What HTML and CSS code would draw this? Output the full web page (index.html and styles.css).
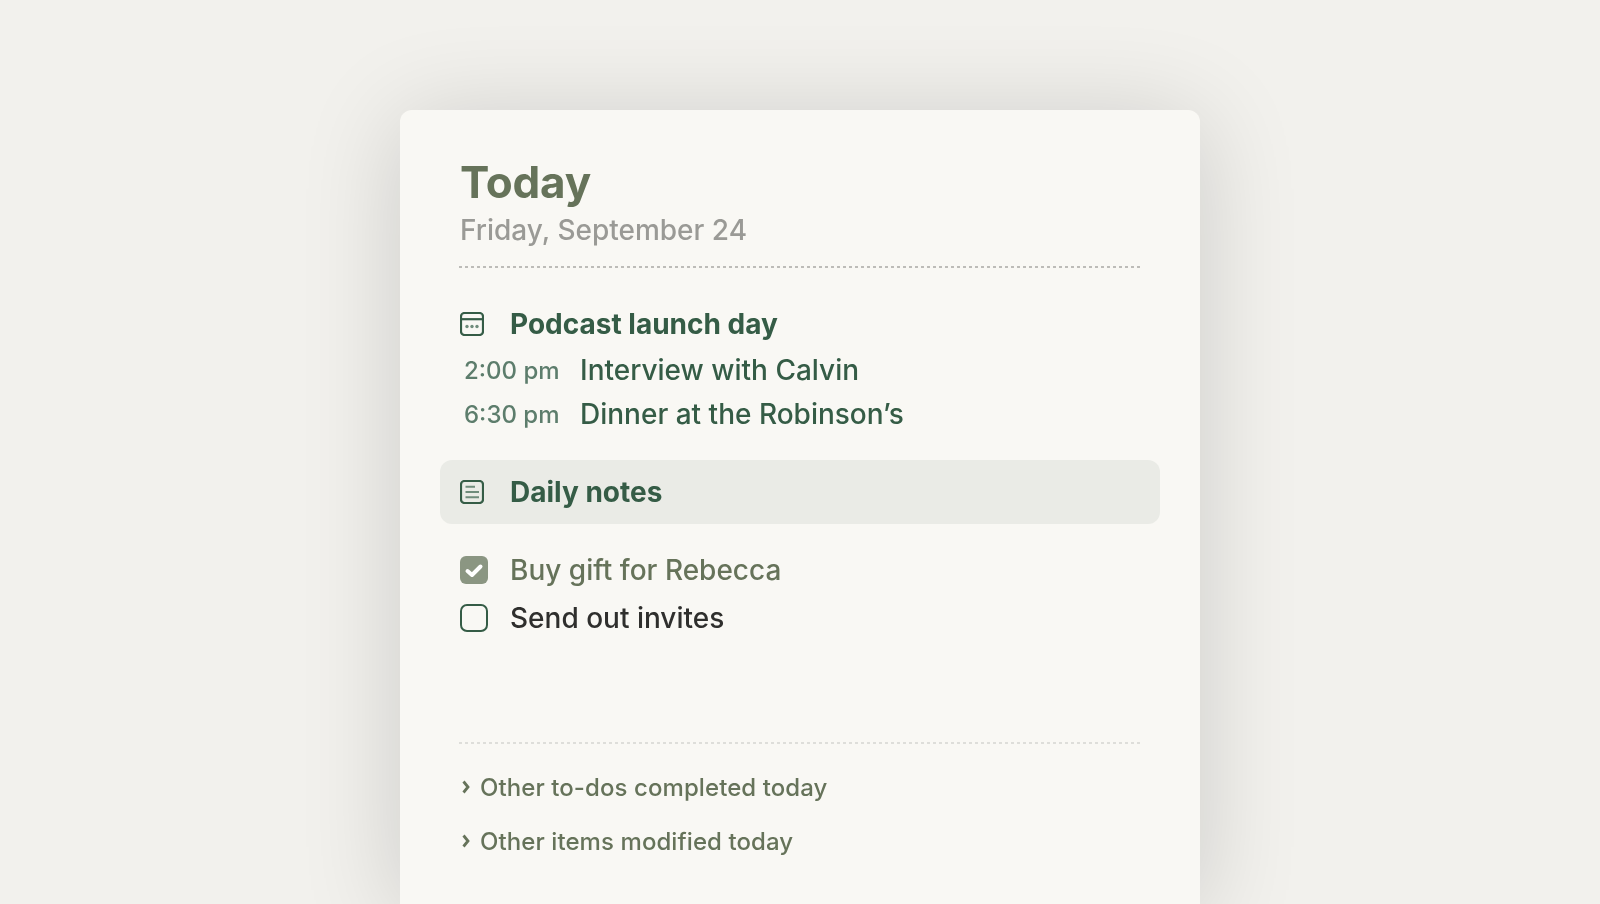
FILE: index.html
```html
<!DOCTYPE html>
<html lang="en">
<head>
<meta charset="utf-8">
<title>Today</title>
<link rel="stylesheet" href="styles.css">
</head>
<body>
<main class="card">
  <header class="head">
    <h1 class="title">Today</h1>
    <p class="date">Friday, September 24</p>
  </header>
  <div class="rule rule-dark"></div>
  <section class="events">
    <div class="row bold-row">
      <svg class="ico" viewBox="0 0 24 24" width="24" height="24" fill="none"><rect x="1" y="1" width="22" height="22" rx="3.5" stroke="#355c46" stroke-width="2.2"/><path d="M1 7.2H23" stroke="#355c46" stroke-width="2.2"/><circle cx="7" cy="14.5" r="1.7" fill="#6f8c7b"/><circle cx="12" cy="14.5" r="1.7" fill="#6f8c7b"/><circle cx="17" cy="14.5" r="1.7" fill="#6f8c7b"/></svg>
      <span class="strong">Podcast launch day</span>
    </div>
    <div class="event"><span class="time">2:00 pm</span><span class="ev-name">Interview with Calvin</span></div>
    <div class="event"><span class="time">6:30 pm</span><span class="ev-name">Dinner at the Robinson’s</span></div>
  </section>
  <div class="notes">
    <svg class="ico" viewBox="0 0 24 24" width="24" height="24" fill="none"><rect x="1" y="1" width="22" height="22" rx="3.5" stroke="#355c46" stroke-width="2.2"/><path d="M5.5 6.7H15M5.5 12H19M5.5 17.3H19" stroke="#6f8c7b" stroke-width="2"/></svg>
    <span class="strong">Daily notes</span>
  </div>
  <section class="todos">
    <div class="row todo">
      <svg class="box" viewBox="0 0 28 28" width="28" height="28"><rect width="28" height="28" rx="6" fill="#8b9682"/><path d="M7.5 15L12 19L20.5 10.5" fill="none" stroke="#fff" stroke-width="4" stroke-linecap="round" stroke-linejoin="round"/></svg>
      <span class="done">Buy gift for Rebecca</span>
    </div>
    <div class="row todo">
      <svg class="box" viewBox="0 0 28 28" width="28" height="28"><rect x="1" y="1" width="26" height="26" rx="6" fill="none" stroke="#355c46" stroke-width="2"/></svg>
      <span class="open">Send out invites</span>
    </div>
  </section>
  <div class="rule rule-light"></div>
  <footer class="more">
    <div class="more-row"><svg class="chev" viewBox="0 0 8 14" width="8" height="14" fill="none"><path d="M1.5 1.5L6 7L1.5 12.5" stroke="#66735a" stroke-width="2.8"/></svg><span>Other to-dos completed today</span></div>
    <div class="more-row"><svg class="chev" viewBox="0 0 8 14" width="8" height="14" fill="none"><path d="M1.5 1.5L6 7L1.5 12.5" stroke="#66735a" stroke-width="2.8"/></svg><span>Other items modified today</span></div>
  </footer>
</main>
</body>
</html>
```
FILE: styles.css
```css
* { box-sizing: border-box; }
html, body { margin: 0; height: 100%; }
body {
  background: #f2f1ed;
  font-family: Inter, "Liberation Sans", sans-serif;
  overflow: hidden;
  padding-top: 110px;
}
.card {
  width: 800px;
  height: 794px;
  margin: 0 auto;
  background: #f9f8f4;
  border-radius: 12px 12px 0 0;
  padding: 0 60px;
  box-shadow: 0 10px 100px rgba(0, 0, 0, 0.16);
  will-change: transform;
}
.head { padding-top: 45px; height: 156px; }
.title { margin: 0; font-size: 44px; line-height: 54px; font-weight: 700; letter-spacing: -0.2px; color: #66735a; }
.date { margin: 1px 0 0; font-size: 28px; line-height: 40px; font-weight: 500; color: #9a9a96; }
.rule { height: 2px; margin-left: -1px; background-size: 6px 2px; background-repeat: repeat-x; }
.rule-dark { background-image: linear-gradient(90deg, #bdbcb8 3px, transparent 3px); }
.rule-light { background-image: linear-gradient(90deg, #dededa 3px, transparent 3px); }
.events { padding-top: 39px; }
.row { display: flex; align-items: center; }
.ico { margin-right: 26px; flex: none; }
.bold-row { height: 34px; margin-bottom: 7px; }
.strong { font-size: 28px; font-weight: 700; color: #355c46; }
.event { display: flex; align-items: center; height: 44px; padding-left: 4px; }
.time { width: 116px; font-size: 24px; font-weight: 500; color: #5d7d6c; }
.ev-name { font-size: 28px; font-weight: 500; color: #355c46; }
.notes {
  display: flex; align-items: center;
  height: 64px; margin: 24px -20px 0; padding: 0 20px;
  background: #eaebe6; border-radius: 12px;
}
.todos { padding-top: 22px; }
.todo { height: 48px; }
.box { margin-right: 22px; flex: none; }
.done { font-size: 28px; font-weight: 500; color: #66735a; }
.open { font-size: 28px; font-weight: 500; color: #2f2f2d; }
.rule-light { margin-top: 100px; }
.more { padding-top: 16px; }
.more-row { display: flex; align-items: center; height: 54px; font-size: 24px; font-weight: 500; letter-spacing: 0.08px; color: #66735a; padding-left: 2px; }
.chev { margin-right: 10px; flex: none; }
```
